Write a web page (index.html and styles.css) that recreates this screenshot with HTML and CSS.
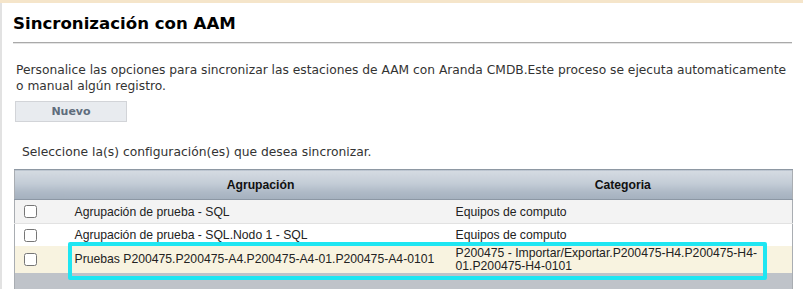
FILE: index.html
```html
<!DOCTYPE html>
<html lang="es">
<head>
<meta charset="utf-8">
<title>Sincronización con AAM</title>
<link rel="stylesheet" href="styles.css">
</head>
<body>
<div class="page">
  <h1 class="title">Sincronización con AAM</h1>
  <div class="rule"></div>
  <p class="intro">Personalice las opciones para sincronizar las estaciones de AAM con Aranda CMDB.Este proceso se ejecuta automaticamente o manual algún registro.</p>
  <button class="btn" type="button">Nuevo</button>
  <p class="hint">Seleccione la(s) configuración(es) que desea sincronizar.</p>
  <div class="grid-wrap">
    <table class="grid">
      <colgroup>
        <col class="c-check">
        <col class="c-group">
        <col class="c-cat">
      </colgroup>
      <thead>
        <tr>
          <th></th>
          <th class="h-group">Agrupación</th>
          <th class="h-cat">Categoria</th>
        </tr>
      </thead>
      <tbody>
        <tr class="r-alt">
          <td class="cb"><input type="checkbox"></td>
          <td class="t-group">Agrupación de prueba - SQL</td>
          <td class="t-cat">Equipos de computo</td>
        </tr>
        <tr class="r-plain">
          <td class="cb"><input type="checkbox"></td>
          <td class="t-group">Agrupación de prueba - SQL.Nodo 1 - SQL</td>
          <td class="t-cat">Equipos de computo</td>
        </tr>
        <tr class="r-sel">
          <td class="cb"><input type="checkbox"></td>
          <td class="t-group">Pruebas P200475.P200475-A4.P200475-A4-01.P200475-A4-0101</td>
          <td class="t-cat">P200475 - Importar/Exportar.P200475-H4.P200475-H4-01.P200475-H4-0101</td>
        </tr>
      </tbody>
      <tfoot>
        <tr><td colspan="3" class="foot"></td></tr>
      </tfoot>
    </table>
    <div class="highlight"></div>
  </div>
</div>
</body>
</html>
```

FILE: styles.css
```css
html, body {
  margin: 0;
  padding: 0;
  background: #ffffff;
}

body {
  border-top: 3px solid #f5e5ca;
  height: 100vh;
  box-sizing: border-box;
  overflow: hidden;
}

.page {
  border-left: 2px solid #e2e2e2;
  padding: 11px 11px 0 11px;
  height: 100%;
  box-sizing: border-box;
  font-family: "DejaVu Sans", Verdana, sans-serif;
  color: #222;
}

.title {
  margin: 0;
  font-size: 16.6px;
  line-height: 20px;
  font-weight: bold;
  color: #000;
}

.rule {
  margin-top: 8px;
  height: 2px;
  background: #a9a9a9;
  border-bottom: 1px solid #e4e4e4;
  box-sizing: border-box;
}

.intro {
  margin: 18px 0 0 3px;
  font-size: 12.25px;
  line-height: 16px;
  color: #333;
}

.btn {
  display: block;
  margin: 7px 0 0 2px;
  width: 112px;
  height: 21px;
  padding: 0;
  background: #e8ebef;
  border: 1px solid #d2d4d8;
  font-family: "DejaVu Sans", Verdana, sans-serif;
  font-size: 11px;
  font-weight: bold;
  color: #5f6d7c;
}

.hint {
  margin: 22px 0 0 9px;
  font-size: 12.3px;
  line-height: 16px;
  color: #333;
}

.grid-wrap {
  position: relative;
  margin: 9px 0 0 1px;
  width: 779px;
}

.grid {
  width: 779px;
  border-collapse: collapse;
  table-layout: fixed;
  font-family: "Liberation Sans", Arial, sans-serif;
  font-size: 12.2px;
  color: #222;
  border-left: 1px solid #a9adb2;
  border-right: 1px solid #a9adb2;
}

.c-check { width: 49px; }
.c-group { width: 386px; }

.grid thead th {
  height: 29px;
  padding: 0;
  border-top: 1px solid #8e98a3;
  border-bottom: 1px solid #8c97a4;
  background: linear-gradient(#d5dbe2 0%, #c3ccd6 45%, #aeb9c6 75%, #a4b0be 100%);
  font-weight: bold;
  color: #111;
  text-align: center;
}

.h-group { padding-left: 8px !important; }
.h-cat { padding-left: 4px !important; }

.grid td {
  padding: 0;
  vertical-align: middle;
}

.cb { padding-left: 5px !important; }

.cb input {
  margin: 3px 3px 3px 4px;
  display: block;
}

.t-group { padding-left: 11px !important; }
.t-cat { padding-left: 6px !important; padding-right: 4px !important; }

.r-alt td {
  height: 23px;
  background: #f3f3f3;
  border-bottom: 1px solid #e2e2e2;
}

.r-plain td {
  height: 22px;
  background: #ffffff;
}

.r-sel td {
  height: 27px;
  background: #f8f3e0;
  line-height: 13px;
}

.foot {
  height: 18px;
  background: #bfc3c9;
}

.highlight {
  position: absolute;
  left: 54px;
  top: 73px;
  width: 699px;
  height: 38px;
  box-sizing: border-box;
  border: 4px solid #1fe6f2;
  border-radius: 2px;
}
```
